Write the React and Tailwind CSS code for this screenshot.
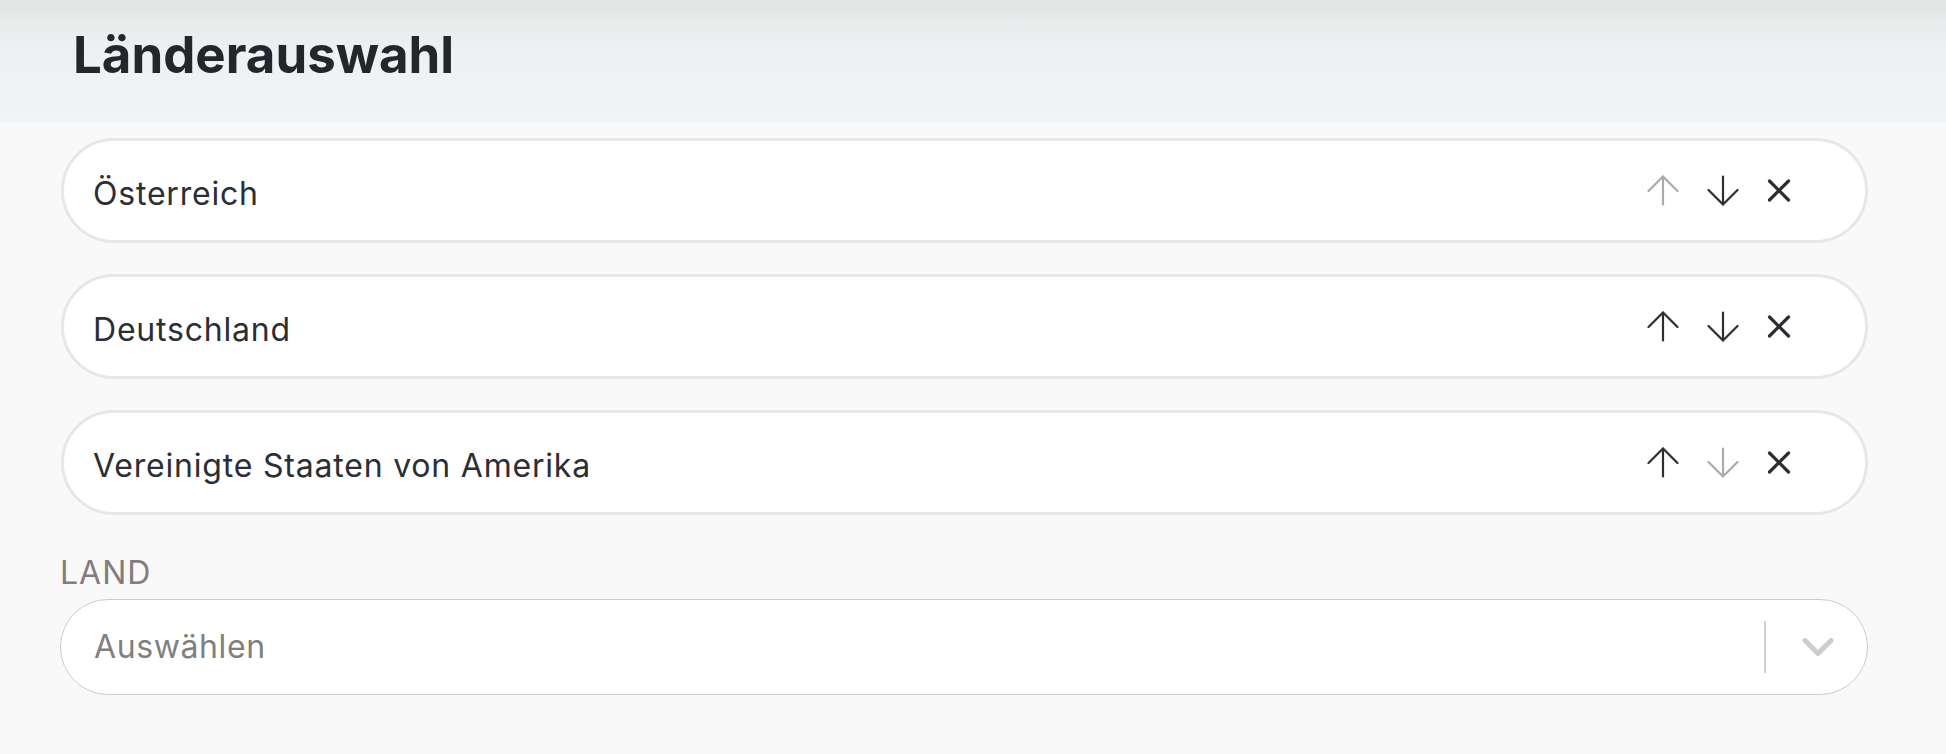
import React from 'react';

const ArrowUp = ({ muted }) => (
  <svg
    width="32"
    height="31"
    viewBox="0 0 32 31"
    fill="none"
    stroke="currentColor"
    strokeWidth="2.2"
    strokeLinecap="round"
    strokeLinejoin="round"
    className={muted ? 'text-[#a9abad]' : 'text-[#2b2f33]'}
  >
    <path d="M16 29.5V1.5" />
    <path d="M1.5 16L16 1.5L30.5 16" />
  </svg>
);

const ArrowDown = ({ muted }) => (
  <svg
    width="32"
    height="31"
    viewBox="0 0 32 31"
    fill="none"
    stroke="currentColor"
    strokeWidth="2.2"
    strokeLinecap="round"
    strokeLinejoin="round"
    className={muted ? 'text-[#a9abad]' : 'text-[#2b2f33]'}
  >
    <path d="M16 1.5V29.5" />
    <path d="M1.5 15L16 29.5L30.5 15" />
  </svg>
);

const Close = () => (
  <svg
    width="24"
    height="23"
    viewBox="0 0 24 23"
    fill="none"
    stroke="currentColor"
    strokeWidth="3.2"
    strokeLinecap="round"
    className="text-[#2b2f33]"
  >
    <path d="M2.5 2L21.5 21" />
    <path d="M21.5 2L2.5 21" />
  </svg>
);

const countries = [
  { name: 'Österreich', first: true },
  { name: 'Deutschland' },
  { name: 'Vereinigte Staaten von Amerika', last: true },
];

const CountryRow = ({ name, first, last }) => (
  <div className="flex h-[105px] items-center rounded-full border-[3px] border-[#e7e7e7] bg-white pl-[29px] pr-[74px]">
    <span className="mt-[6px] flex-1 text-[32px] leading-none tracking-[0.8px] text-[#2b2e33]">{name}</span>
    <div className="flex items-center gap-[28px]">
      <ArrowUp muted={first} />
      <ArrowDown muted={last} />
      <Close />
    </div>
  </div>
);

export default function App() {
  return (
    <div className="min-h-screen bg-[#f9f9f9] font-['Inter',sans-serif]">
      {/* Header */}
      <div className="h-[123px] bg-gradient-to-b from-[#e3e4e4] via-[#eef1f3] via-40% to-[#f1f4f7] pl-[73px] pt-[30px]">
        <h1 className="text-[51px] font-bold leading-[50px] text-[#23272b]">Länderauswahl</h1>
      </div>

      <div className="pl-[60px] pr-[78px]">
        {/* Selected countries */}
        <div className="mt-[15px] flex flex-col gap-[31px] pl-px">
          {countries.map((c) => (
            <CountryRow key={c.name} {...c} />
          ))}
        </div>

        {/* Country select */}
        <div className="mt-[42px] text-[32px] leading-[31px] tracking-[1px] text-[#857b7b]">LAND</div>
        <div className="mt-[11px] flex h-[96px] items-center rounded-full border border-[#cccccc] bg-white pl-[33px] pr-[33px]">
          <span className="flex-1 text-[32px] leading-none tracking-[0.6px] text-[#808080]">Auswählen</span>
          <div className="h-[52px] w-[2px] bg-[#d0d0d0]" />
          <svg
            width="32"
            height="18"
            viewBox="0 0 32 18"
            fill="none"
            stroke="currentColor"
            strokeWidth="5"
            strokeLinecap="round"
            strokeLinejoin="round"
            className="ml-[36px] text-[#cccccc]"
          >
            <path d="M3 2.5L16 15.5L29 2.5" />
          </svg>
        </div>
      </div>
    </div>
  );
}
